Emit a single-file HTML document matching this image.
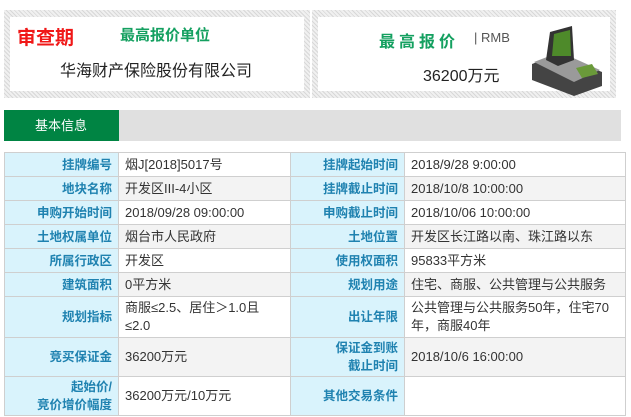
<!DOCTYPE html>
<html><head><meta charset="utf-8"><style>
*{margin:0;padding:0;box-sizing:border-box}
body{width:631px;height:417px;background:#fff;font-family:"Liberation Sans","Noto Sans CJK SC",sans-serif;position:relative;overflow:hidden}
.box{position:absolute;top:10px;height:88px;background:repeating-linear-gradient(45deg,#d8d8d8 0 1px,#f0f0f0 1px 3px)}
.inner{position:absolute;background:#fff}
.a{position:absolute;white-space:nowrap}
table{position:absolute;left:4px;top:152px;border-collapse:collapse;font-size:13px}
td{border:1px solid #cfcfcf;padding:0 6px;line-height:18px}
td.l{background:#d9f3fc;color:#1f82b0;text-align:right;width:114px;font-weight:bold;font-size:12.5px}
td.v{width:172px;color:#333}
td.v2{width:221px;color:#333}
tr.g td.v,tr.g td.v2{background:#f3f3f3}
</style></head><body>
<div class="box" style="left:4px;width:306px"><div class="inner" style="left:6px;top:7px;width:294px;height:74px"></div></div>
<div class="box" style="left:312px;width:304px"><div class="inner" style="left:6px;top:7px;width:292px;height:74px"></div></div>
<div class="a" style="left:17px;top:23px;color:#f01818;font-size:19px;font-weight:bold">审查期</div>
<div class="a" style="left:120px;top:24px;color:#14a060;font-size:15px;font-weight:bold">最高报价单位</div>
<div class="a" style="left:60px;top:57px;color:#222;font-size:16px">华海财产保险股份有限公司</div>
<div class="a" style="left:379px;top:28px;color:#14a060;font-size:16px;font-weight:bold;letter-spacing:4px">最高报价</div>
<div class="a" style="left:474px;top:30px;color:#555;font-size:13px">| RMB</div>
<div class="a" style="left:423px;top:62px;color:#222;font-size:16px">36200万元</div>
<svg class="a" style="left:528px;top:24px" width="78" height="72" viewBox="0 0 78 72">
<path d="M4 40 L30 30 L74 48 L74 62 L46 72 L4 56Z" fill="#444"/>
<path d="M6 38 L32 28 L72 46 L46 58Z" fill="#9a9a9a"/>
<path d="M18 36 L22 8 L44 2 L46 36 L30 42Z" fill="#333"/>
<path d="M24 32 L26 10 L42 6 L43 32Z" fill="#4e8a2a"/>
<path d="M48 44 L64 40 L70 50 L54 54Z" fill="#6a9a3a"/>
</svg>
<div class="a" style="left:4px;top:110px;width:617px;height:31px;background:#e0e0e0"></div>
<div class="a" style="left:4px;top:110px;width:115px;height:31px;background:#008443;color:#fff;font-size:13px;line-height:31px;padding-left:31px">基本信息</div>
<table>
<tr style="height:24px"><td class="l">挂牌编号</td><td class="v">烟J[2018]5017号</td><td class="l">挂牌起始时间</td><td class="v2">2018/9/28 9:00:00</td></tr>
<tr class="g" style="height:24px"><td class="l">地块名称</td><td class="v">开发区III-4小区</td><td class="l">挂牌截止时间</td><td class="v2">2018/10/8 10:00:00</td></tr>
<tr style="height:24px"><td class="l">申购开始时间</td><td class="v">2018/09/28 09:00:00</td><td class="l">申购截止时间</td><td class="v2">2018/10/06 10:00:00</td></tr>
<tr class="g" style="height:24px"><td class="l">土地权属单位</td><td class="v">烟台市人民政府</td><td class="l">土地位置</td><td class="v2">开发区长江路以南、珠江路以东</td></tr>
<tr style="height:24px"><td class="l">所属行政区</td><td class="v">开发区</td><td class="l">使用权面积</td><td class="v2">95833平方米</td></tr>
<tr class="g" style="height:24px"><td class="l">建筑面积</td><td class="v">0平方米</td><td class="l">规划用途</td><td class="v2">住宅、商服、公共管理与公共服务</td></tr>
<tr style="height:41px"><td class="l">规划指标</td><td class="v">商服≤2.5、居住＞1.0且<br>≤2.0</td><td class="l">出让年限</td><td class="v2">公共管理与公共服务50年，住宅70<br>年，商服40年</td></tr>
<tr class="g" style="height:39px"><td class="l">竞买保证金</td><td class="v">36200万元</td><td class="l">保证金到账<br>截止时间</td><td class="v2">2018/10/6 16:00:00</td></tr>
<tr style="height:39px"><td class="l">起始价/<br>竞价增价幅度</td><td class="v">36200万元/10万元</td><td class="l">其他交易条件</td><td class="v2"></td></tr>
</table>
</body></html>
